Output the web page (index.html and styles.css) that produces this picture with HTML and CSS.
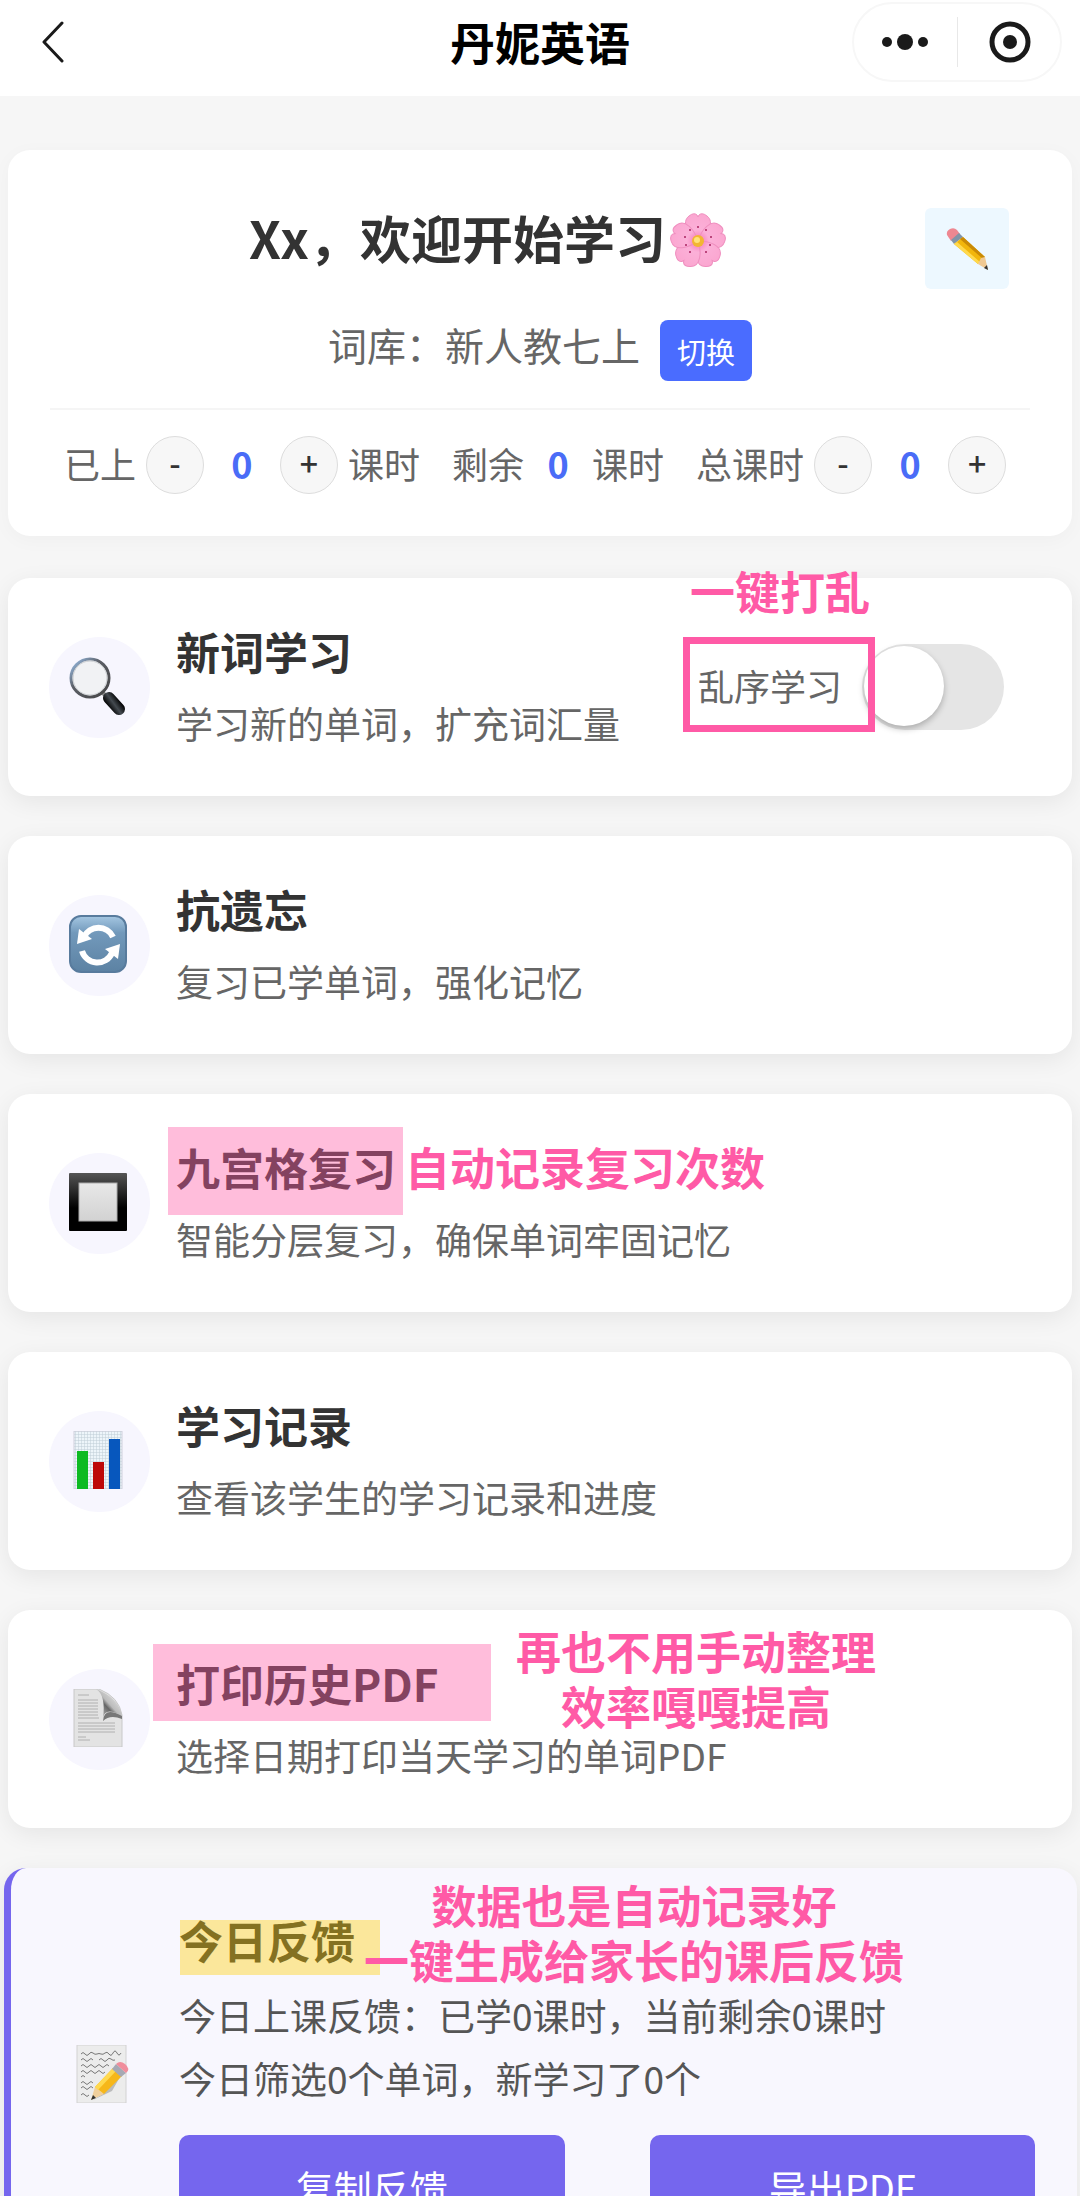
FILE: index.html
```html
<!DOCTYPE html>
<html lang="zh-CN">
<head>
    <meta charset="UTF-8">
    <meta name="viewport" content="width=device-width, initial-scale=1.0">
    <title>丹妮英语</title>
    <link rel="stylesheet" href="styles.css">
</head>
<body>
    <header class="navbar">
        <button class="back-btn" aria-label="返回">
            <svg width="24" height="42" viewBox="0 0 24 42"><path d="M21 2 L3 21 L21 40" fill="none" stroke="#1a1a1a" stroke-width="3" stroke-linecap="round" stroke-linejoin="round"/></svg>
        </button>
        <h1>丹妮英语</h1>
        <div class="capsule">
            <button aria-label="更多">
                <svg width="50" height="44" viewBox="0 0 50 44"><circle cx="7" cy="22" r="5"/><circle cx="25" cy="22" r="8"/><circle cx="43" cy="22" r="5"/></svg>
            </button>
            <button aria-label="关闭">
                <svg width="44" height="44" viewBox="0 0 44 44"><circle cx="23" cy="22" r="18" fill="none" stroke="#1a1a1a" stroke-width="5"/><circle cx="23" cy="22" r="7"/></svg>
            </button>
        </div>
    </header>

    <main class="page">
        <!-- 学生信息 -->
        <section class="card student-card">
            <div class="welcome">
                <h2>Xx，欢迎开始学习<svg class="flower" viewBox="0 0 56 56" aria-hidden="true">
                    <defs>
                        <radialGradient id="petal" gradientUnits="userSpaceOnUse" cx="28" cy="28" r="28">
                            <stop offset="0" stop-color="#f470b2"/><stop offset="0.4" stop-color="#fbb0d8"/><stop offset="1" stop-color="#fba6d0"/>
                        </radialGradient>
                        <path id="petal-shape" d="M28 28 C18 21 11 9 19 3 Q24 -1 27 2 L28 4 L29 2 Q32 -1 37 3 C45 9 38 21 28 28Z" fill="url(#petal)" stroke="#ef8fbf" stroke-width="1"/>
                    </defs>
                    <use href="#petal-shape"/>
                    <use href="#petal-shape" transform="rotate(72 28 28)"/>
                    <use href="#petal-shape" transform="rotate(144 28 28)"/>
                    <use href="#petal-shape" transform="rotate(216 28 28)"/>
                    <use href="#petal-shape" transform="rotate(288 28 28)"/>
                    <g fill="#a8235f"><circle cx="28" cy="14" r="1"/><circle cx="41" cy="24" r="1"/><circle cx="36" cy="39" r="1"/><circle cx="20" cy="39" r="1"/><circle cx="15" cy="24" r="1"/><circle cx="36" cy="17" r="1"/><circle cx="20" cy="17" r="1"/><circle cx="40" cy="32" r="1"/><circle cx="16" cy="32" r="1"/></g>
                    <circle cx="28" cy="28" r="6" fill="#f2b632"/><circle cx="27" cy="27" r="3" fill="#ffe27a"/>
                </svg></h2>
                <button class="edit-btn" aria-label="编辑">
                    <svg width="44" height="44" viewBox="0 0 44 44">
                        <path d="M2 8 Q1 4 5 2 Q9 0 12 3 L15 7 L6 14Z" fill="#ee8791"/>
                        <path d="M6 13 L14 6 L18 10 L9 17Z" fill="#8194a8"/>
                        <path d="M9 17 L18 10 L40 30 L33 37Z" fill="#f2b60c"/>
                        <path d="M9 17 L12 15 L35 35 L33 37Z" fill="#ffd94d"/>
                        <path d="M15 12 L18 10 L40 30 L38 32Z" fill="#c98a07"/>
                        <path d="M33 37 L36 31 L40 30 L43 43Z" fill="#f0c993"/>
                        <path d="M39 41 L42 38 L43 43Z" fill="#333"/>
                    </svg>
                </button>
            </div>

            <div class="word-bank">
                <span>词库：新人教七上</span>
                <button class="switch-btn">切换</button>
            </div>

            <div class="lessons">
                <div class="lesson-item">
                    <span>已上</span>
                    <div class="stepper">
                        <button aria-label="已上减一">-</button>
                        <b>0</b>
                        <button aria-label="已上加一">+</button>
                    </div>
                    <span>课时</span>
                </div>
                <div class="lesson-item remain">
                    <span>剩余</span>
                    <b>0</b>
                    <span>课时</span>
                </div>
                <div class="lesson-item">
                    <span>总课时</span>
                    <div class="stepper">
                        <button aria-label="总课时减一">-</button>
                        <b>0</b>
                        <button aria-label="总课时加一">+</button>
                    </div>
                </div>
            </div>
        </section>

        <!-- 功能列表 -->
        <section class="card menu-card">
            <div class="menu-icon">
                <svg viewBox="0 0 58 58">
                    <defs>
                        <linearGradient id="rim" x1="0" y1="0" x2="1" y2="1"><stop offset="0" stop-color="#9cc3ee"/><stop offset="0.4" stop-color="#5c5f66"/><stop offset="1" stop-color="#444"/></linearGradient>
                        <linearGradient id="handle" gradientUnits="userSpaceOnUse" x1="39" y1="50" x2="50" y2="42"><stop offset="0" stop-color="#000"/><stop offset="0.5" stop-color="#444a50"/><stop offset="1" stop-color="#000"/></linearGradient>
                    </defs>
                    <path d="M33 35 L38 40" stroke="#888" stroke-width="4"/>
                    <circle cx="21" cy="21" r="19" fill="#f1f2f4" stroke="url(#rim)" stroke-width="3"/>
                    <circle cx="21" cy="21" r="17" fill="none" stroke="#c9cccf" stroke-width="1"/>
                    <path d="M40 41 L50 52" stroke="url(#handle)" stroke-width="12" stroke-linecap="round"/>
                </svg>
            </div>
            <div class="menu-text">
                <h3>新词学习</h3>
                <p>学习新的单词，扩充词汇量</p>
            </div>
            <label class="shuffle">
                <span>乱序学习</span>
                <input type="checkbox" role="switch">
            </label>
            <div class="frame"></div>
            <div class="note note-shuffle">一键打乱</div>
        </section>

        <section class="card menu-card">
            <div class="menu-icon">
                <svg viewBox="0 0 58 58">
                    <defs>
                        <linearGradient id="blue" x1="0" y1="0" x2="0" y2="1"><stop offset="0" stop-color="#a5c7e2"/><stop offset="0.3" stop-color="#7299bb"/><stop offset="1" stop-color="#5c82a3"/></linearGradient>
                    </defs>
                    <rect x="1" y="1" width="56" height="56" rx="11" fill="url(#blue)" stroke="#587b9d" stroke-width="2"/>
                    <path d="M15 22 A16 16 0 0 1 44 22" fill="none" stroke="#fff" stroke-width="6"/>
                    <path d="M13 36 A16 16 0 0 0 43 38" fill="none" stroke="#fff" stroke-width="6"/>
                    <path d="M10 14 L8 29 L23 24Z" fill="#fff"/>
                    <path d="M51 29 L36 34 L49 44Z" fill="#fff"/>
                </svg>
            </div>
            <div class="menu-text">
                <h3>抗遗忘</h3>
                <p>复习已学单词，强化记忆</p>
            </div>
        </section>

        <section class="card menu-card">
            <div class="menu-icon">
                <svg viewBox="0 0 58 58">
                    <defs>
                        <linearGradient id="black" x1="0" y1="0" x2="0" y2="1"><stop offset="0" stop-color="#555"/><stop offset="0.6" stop-color="#000"/></linearGradient>
                        <linearGradient id="grey" x1="0" y1="0" x2="0" y2="1"><stop offset="0" stop-color="#e8e8e8"/><stop offset="1" stop-color="#d2d2d2"/></linearGradient>
                    </defs>
                    <rect width="58" height="58" rx="1" fill="url(#black)"/>
                    <rect x="10" y="10" width="38" height="38" fill="url(#grey)" stroke="#aaa" stroke-width="1"/>
                </svg>
            </div>
            <div class="menu-text">
                <h3>九宫格复习</h3>
                <p>智能分层复习，确保单词牢固记忆</p>
            </div>
            <div class="marker marker-grid"></div>
            <div class="note note-grid">自动记录复习次数</div>
        </section>

        <section class="card menu-card">
            <div class="menu-icon">
                <svg viewBox="0 0 58 58">
                    <defs>
                        <pattern id="mesh" width="3" height="3" patternUnits="userSpaceOnUse"><rect width="3" height="3" fill="#edf5fa"/><path d="M0 0H3M0 0V3" stroke="#bfcdd6" stroke-width="1"/></pattern>
                    </defs>
                    <rect x="5" y="0" width="48" height="58" fill="url(#mesh)" stroke="#cfd0dc" stroke-width="1"/>
                    <rect x="8" y="20" width="11" height="38" fill="#0dba22"/>
                    <rect x="24" y="31" width="11" height="27" fill="#bd0808"/>
                    <rect x="40" y="8" width="11" height="50" fill="#0757bd"/>
                </svg>
            </div>
            <div class="menu-text">
                <h3>学习记录</h3>
                <p>查看该学生的学习记录和进度</p>
            </div>
        </section>

        <section class="card menu-card">
            <div class="menu-icon">
                <svg viewBox="0 0 58 58">
                    <defs>
                        <linearGradient id="curl" x1="1" y1="0" x2="0" y2="1"><stop offset="0" stop-color="#fafafa"/><stop offset="0.5" stop-color="#bbb"/><stop offset="0.6" stop-color="#666"/><stop offset="1" stop-color="#ddd"/></linearGradient>
                    </defs>
                    <path d="M5 0 H30 Q50 8 53 26 V58 H5Z" fill="#e3e3e3" stroke="#c8c8c8" stroke-width="1"/>
                    <path d="M9 6H20M9 11H29M9 14H29M9 17H29M9 20H29M9 23H29M9 26H29M9 29H30M9 34H46M9 37H46M9 40H46M9 43H46M9 48H17M9 51H21" stroke="#b0b0b0" stroke-width="1"/>
                    <path d="M27 0 Q37 6 34 29 Q36 17 53 27 Q50 9 27 0Z" fill="url(#curl)"/>
                    <path d="M34 32 Q35 17 53 27 V30 Q41 25 34 32Z" fill="#777"/>
                </svg>
            </div>
            <div class="menu-text">
                <h3>打印历史PDF</h3>
                <p>选择日期打印当天学习的单词PDF</p>
            </div>
            <div class="marker marker-print"></div>
            <div class="note note-print">再也不用手动整理<br>效率嘎嘎提高</div>
        </section>

        <!-- 今日反馈 -->
        <section class="card menu-card feedback-card">
            <div class="menu-icon">
                <svg viewBox="0 0 58 58">
                    <rect x="3" y="0" width="49" height="58" fill="#ececec" stroke="#d2d2d2" stroke-width="1"/>
                    <g fill="none" stroke="#777" stroke-width="1">
                        <path d="M7 9 q2 -3 4 0 t4 0 t4 -1 t4 1 t4 0 t4 -1 t4 1 t4 -1 t4 0 t4 0"/>
                        <path d="M7 15 q2 -3 4 0 t4 0 t4 0 M25 15 q2 -3 4 0 t4 0 t4 -1 t4 1"/>
                        <path d="M7 21 q2 -3 4 0 t4 0 t4 0 t4 0 t4 0 t4 0 t4 0"/>
                        <path d="M7 27 q2 -3 4 0 t4 0 t4 0 t4 0 t4 0 t4 0"/>
                        <path d="M7 32 q2 -3 4 0"/>
                        <path d="M7 38 q2 -3 4 0 t4 0 t4 0 M7 43 q2 -3 4 0 t4 0 t4 0 M7 50 q2 -3 4 0 t4 0"/>
                    </g>
                    <path d="M19 55 L38 46 L46 32 L30 48Z" fill="#bbb"/>
                    <path d="M17 55 L21 42 L30 49Z" fill="#f0cf9c"/>
                    <path d="M17 55 L19 50 L22 53Z" fill="#333"/>
                    <path d="M21 42 L39 23 L48 31 L30 49Z" fill="#f6b71a"/>
                    <path d="M21 42 L39 23 L42 26 L24 45Z" fill="#ffd94f"/>
                    <path d="M38 24 L42 19 L52 28 L47 32Z" fill="#a6a9b4"/>
                    <path d="M42 19 Q46 15 51 19 Q57 24 52 28Z" fill="#f08d9c"/>
                </svg>
            </div>
            <div class="menu-text">
                <h3>今日反馈</h3>
                <p>今日上课反馈：已学0课时，当前剩余0课时<br>今日筛选0个单词，新学习了0个</p>
                <div class="feedback-actions">
                    <button>复制反馈</button>
                    <button>导出PDF</button>
                </div>
            </div>
            <div class="marker marker-feedback"></div>
            <div class="note note-feedback">数据也是自动记录好<br>一键生成给家长的课后反馈</div>
        </section>
    </main>
</body>
</html>
```
FILE: styles.css
```css
* {
    box-sizing: border-box;
    margin: 0;
    padding: 0;
}

body {
    height: 100vh;
    overflow: hidden;
    background: #f6f6f6;
    color: #333;
    font-family: "Noto Sans CJK SC", sans-serif;
}

button {
    border: none;
    background: none;
    font-family: inherit;
    cursor: pointer;
}

svg {
    display: block;
}

/* 顶部导航 */
.navbar {
    display: grid;
    grid-template-columns: 1fr auto 1fr;
    align-items: center;
    height: 96px;
    padding: 1px 18px 14px 41px;
    background: #fff;
}

.navbar h1 {
    margin-right: 23px;
    color: #000;
    font-size: 45px;
    font-weight: 700;
    line-height: 60px;
}

.back-btn {
    justify-self: start;
}

.capsule {
    display: flex;
    justify-self: end;
    align-items: center;
    width: 210px;
    height: 80px;
    border: 2px solid #f7f7f7;
    border-radius: 40px;
}

.capsule button {
    display: flex;
    flex: 1;
    justify-content: center;
    align-items: center;
    height: 50px;
    fill: #1a1a1a;
}

.capsule button + button {
    border-left: 1px solid #e8e8e8;
}

/* 卡片 */
.page {
    padding: 54px 8px;
}

.card {
    position: relative;
    margin-bottom: 40px;
    background: #fff;
    border-radius: 22px;
    box-shadow: 0 6px 24px rgba(0, 0, 0, 0.07);
}

.student-card {
    margin-bottom: 42px;
    padding: 58px 42px 42px;
    box-shadow: 0 4px 20px rgba(0, 0, 0, 0.03);
}

.welcome {
    display: flex;
    align-items: flex-start;
    padding-right: 21px;
}

.welcome h2 {
    display: flex;
    flex: 1;
    justify-content: center;
    align-items: flex-start;
    font-size: 51px;
    line-height: 58px;
}

.flower {
    width: 56px;
    height: 56px;
    margin-top: 5px;
    margin-left: 4px;
}

.edit-btn {
    display: flex;
    justify-content: center;
    align-items: center;
    width: 84px;
    height: 81px;
    background: #edf8ff;
    border-radius: 6px;
}

.word-bank {
    display: flex;
    justify-content: center;
    align-items: flex-start;
    gap: 20px;
    padding: 31px 0 27px;
    border-bottom: 2px solid #f5f5f5;
    color: #666;
    font-size: 39px;
    line-height: 48px;
}

.switch-btn {
    height: 61px;
    padding: 0 17px;
    background: #4a6cff;
    border-radius: 8px;
    color: #fff;
    font-size: 29px;
}

.lessons {
    display: flex;
    justify-content: center;
    gap: 32px;
    padding: 26px 10px 0 0;
    color: #666;
    font-size: 36px;
    line-height: 54px;
}

.lesson-item,
.stepper {
    display: flex;
    align-items: center;
}

.lesson-item {
    gap: 10px;
}

.lesson-item.remain {
    gap: 0;
}

.lesson-item span,
.lesson-item b {
    padding-bottom: 4px;
}

.lesson-item b {
    width: 76px;
    color: #4a6cf7;
    text-align: center;
}

.lesson-item.remain b {
    width: 68px;
}

.stepper button {
    width: 58px;
    height: 58px;
    padding-bottom: 6px;
    background: #f7f7f7;
    border: 1px solid #ddd;
    border-radius: 50%;
    color: #333;
    font-size: 32px;
    font-weight: 500;
    line-height: 48px;
}

.menu-card {
    display: flex;
    align-items: center;
    padding: 43px 68px 43px 41px;
}

.menu-icon {
    display: flex;
    flex-shrink: 0;
    justify-content: center;
    align-items: center;
    width: 101px;
    height: 101px;
    margin-right: 26px;
    padding: 0 4px 2px 0;
    background: #f7f6fe;
    border-radius: 50%;
}

.menu-icon svg {
    width: 58px;
    height: 58px;
}

.menu-text {
    flex: 1;
    padding-bottom: 4px;
}

.menu-text h3 {
    margin-bottom: 16px;
    font-size: 44px;
    line-height: 60px;
}

.menu-text p {
    color: #666;
    font-size: 37px;
    line-height: 52px;
}

/* 乱序开关 */
.shuffle {
    display: flex;
    align-items: center;
    gap: 20px;
    color: #666;
    font-size: 36px;
    cursor: pointer;
}

.shuffle span {
    padding-bottom: 4px;
}

.shuffle input {
    appearance: none;
    width: 142px;
    height: 86px;
    padding: 2px;
    background: #e5e5e5;
    border-radius: 43px;
}

.shuffle input::before {
    content: "";
    display: block;
    width: 80px;
    height: 80px;
    background: #fff;
    border-radius: 50%;
    box-shadow: 0 3px 6px rgba(0, 0, 0, 0.25);
}

.shuffle input:checked {
    background: #4a6cff;
}

.shuffle input:checked::before {
    margin-left: 58px;
}

/* 今日反馈 */
.feedback-card {
    margin: 0 -5px 0 -4px;
    padding: 42px 42px 36px 41px;
    background: #f8f7fe;
    border-left: 7px solid #7566ee;
}

.feedback-card .menu-icon {
    padding: 0 0 8px;
    background: none;
}

.feedback-card h3 {
    margin-bottom: 14px;
}

.feedback-card p {
    color: #555;
    line-height: 63px;
}

.feedback-actions {
    display: flex;
    gap: 85px;
    margin-top: 25px;
}

.feedback-actions button {
    flex: 1;
    height: 106px;
    padding-bottom: 4px;
    background: #7566ee;
    border-radius: 10px;
    color: #fff;
    font-size: 38px;
}

/* 手写标注 */
.note {
    position: absolute;
    color: #ff5aa6;
    font-size: 45px;
    font-weight: 700;
    line-height: 55px;
    text-align: center;
    white-space: nowrap;
    pointer-events: none;
}

.note-shuffle {
    top: -15px;
    right: 202px;
}

.note-grid {
    top: 45px;
    left: 397px;
}

.note-print {
    top: 13px;
    left: 508px;
}

.note-feedback {
    top: 9px;
    left: 353px;
}

.frame {
    position: absolute;
    top: 59px;
    right: 197px;
    width: 192px;
    height: 95px;
    border: 7px solid #ff5aa6;
    pointer-events: none;
}

.marker {
    position: absolute;
    background: rgba(255, 90, 166, 0.4);
    pointer-events: none;
}

.marker-grid {
    top: 33px;
    left: 160px;
    width: 235px;
    height: 88px;
}

.marker-print {
    top: 34px;
    left: 145px;
    width: 338px;
    height: 77px;
}

.marker-feedback {
    top: 52px;
    left: 169px;
    width: 200px;
    height: 55px;
    background: rgba(255, 208, 8, 0.4);
}
```
